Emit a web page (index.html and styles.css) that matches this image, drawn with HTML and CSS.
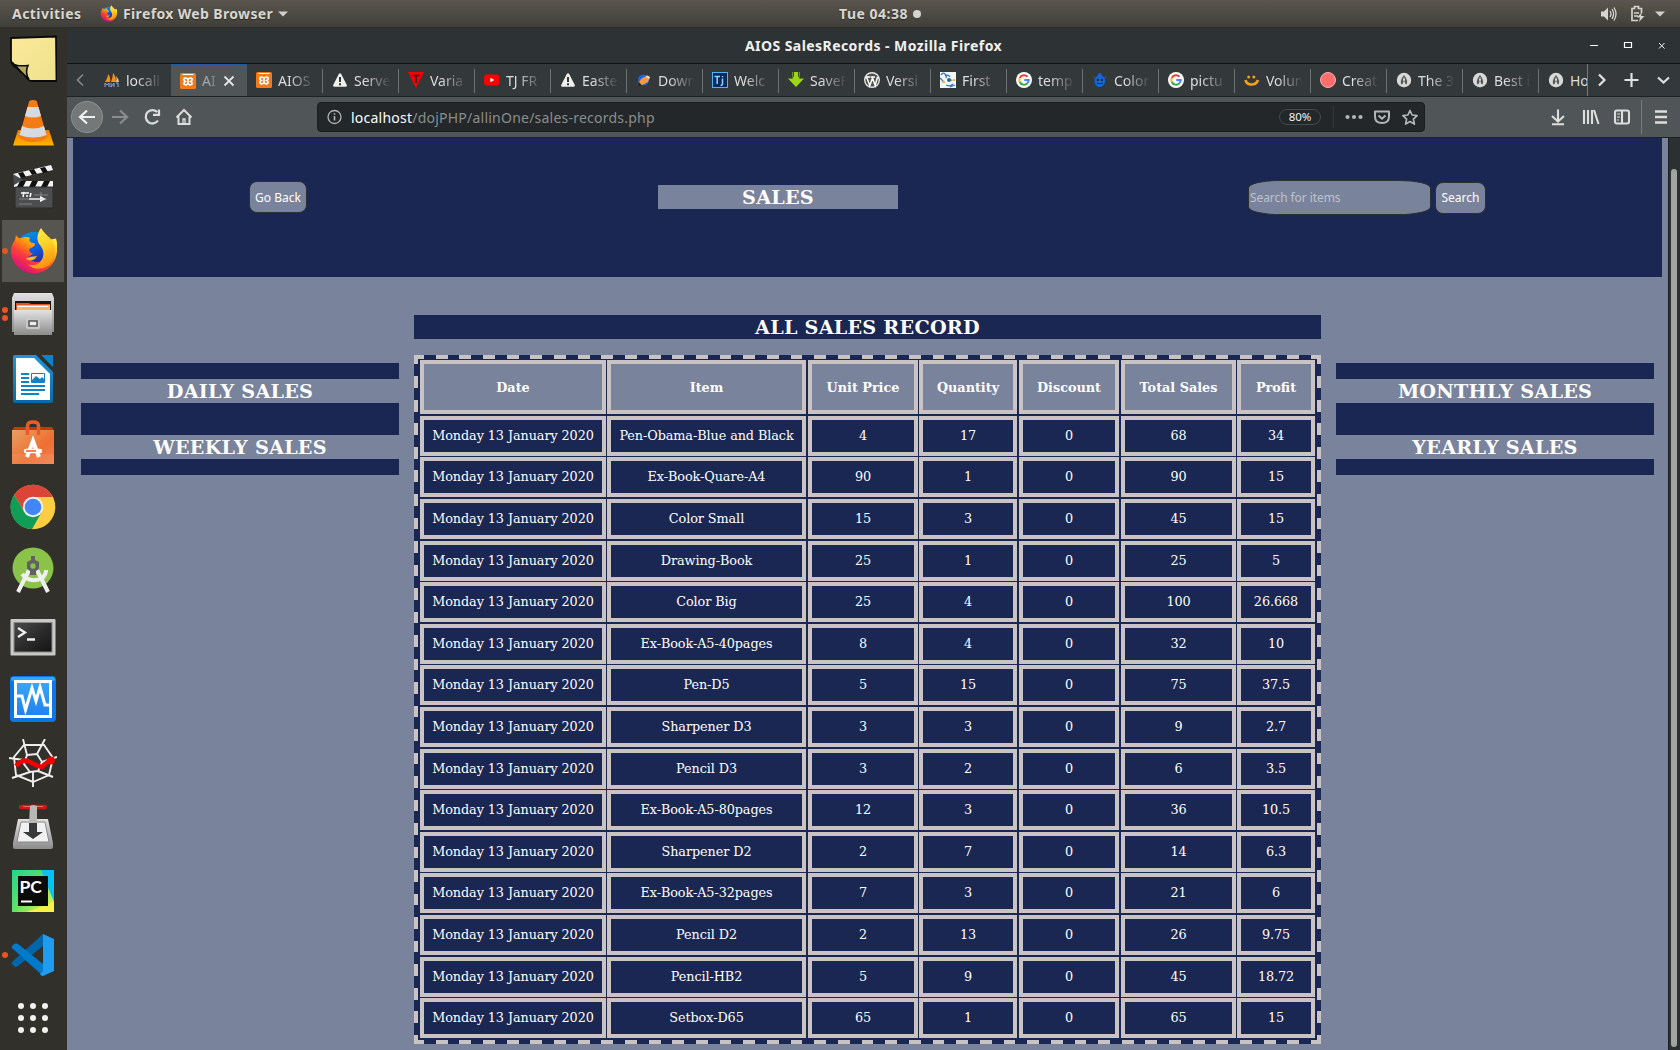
FILE: index.html
```html
<!DOCTYPE html>
<html lang="en">
<head>
<meta charset="utf-8">
<title>AIOS SalesRecords</title>
<link rel="stylesheet" href="styles.css">
</head>
<body>
<svg width="0" height="0" class="defs">
  <defs>
    <linearGradient id="gFox" x1="0.8" y1="0.1" x2="0.2" y2="0.9"><stop offset="0" stop-color="#ffe63a"/><stop offset=".35" stop-color="#ff9a0a"/><stop offset=".65" stop-color="#ff3b3b"/><stop offset="1" stop-color="#d4127c"/></linearGradient>
    <linearGradient id="gTail" x1="0" y1="0" x2="0.3" y2="1"><stop offset="0" stop-color="#fff44f"/><stop offset=".5" stop-color="#ffd52a"/><stop offset="1" stop-color="#ff980e"/></linearGradient>
    <linearGradient id="gBlue" x1="0" y1="0" x2="0.4" y2="1"><stop offset="0" stop-color="#00a0e8"/><stop offset=".55" stop-color="#0a5fe0"/><stop offset="1" stop-color="#3a1c8a"/></linearGradient>
    <linearGradient id="gNote" x1="0" y1="0" x2="1" y2="1"><stop offset="0" stop-color="#fbe99b"/><stop offset="1" stop-color="#eee28c"/></linearGradient>
    <linearGradient id="gSteel" x1="0" y1="0" x2="0" y2="1"><stop offset="0" stop-color="#e2e2e2"/><stop offset="1" stop-color="#8c8c8c"/></linearGradient>
    <linearGradient id="gCone" x1="0" y1="0" x2="0" y2="1"><stop offset="0" stop-color="#f57a00"/><stop offset="1" stop-color="#ffb400"/></linearGradient>
    <linearGradient id="gBag" x1="0" y1="0" x2="1" y2="1"><stop offset="0" stop-color="#e8a063"/><stop offset=".6" stop-color="#ee6f33"/><stop offset="1" stop-color="#f0824e"/></linearGradient>
    <linearGradient id="gDoc" x1="0" y1="0" x2="0" y2="1"><stop offset="0" stop-color="#1e96dc"/><stop offset="1" stop-color="#066aa8"/></linearGradient>
    <linearGradient id="gTerm" x1="0" y1="0" x2="1" y2="1"><stop offset="0" stop-color="#4a4a4a"/><stop offset=".5" stop-color="#2c2c2c"/><stop offset="1" stop-color="#141414"/></linearGradient>
    <linearGradient id="gMon" x1="0" y1="0" x2="0" y2="1"><stop offset="0" stop-color="#38a8f8"/><stop offset="1" stop-color="#2080f0"/></linearGradient>
    <linearGradient id="gPc" x1="0" y1="0" x2="1" y2="1"><stop offset="0" stop-color="#21d789"/><stop offset=".5" stop-color="#5fe06a"/><stop offset="1" stop-color="#fcf84a"/></linearGradient>
    <symbol id="firefox" viewBox="0 0 48 48">
      <circle cx="25" cy="24" r="19" fill="url(#gBlue)"/>
      <path d="M7 8c1 2 2 3 4 3.500c4-2 8-2 10-.5c-1 2-1 3 1 4.500l4 1c0 3-3 4-5 5c-2 2 0 5 3 5c-2 2-4 2-5 4c4 5 12 7 17 1c4-5 3-13 0-18l11-2c1 4 2 7 1 13c-1 12-11 22-24 22C12 46 2 36 2 24C2 18 5 15 6 13Z" fill="url(#gFox)"/>
      <path d="M32 1c-4 6-5 12-1 17c5 6 4 13 0 17c-4 4-9 4-12 2c5 7 18 6 23-2c6-9 4-19-1-24c-3-3-6-5-9-10Z" fill="url(#gTail)"/>
      <path d="M17 32c4-3 7-2 11-3c-2 4-6 6-11 3Z" fill="#ffb52b"/>
    </symbol>
    <symbol id="warn" viewBox="0 0 16 16"><path d="M8 1.200c.5 0 1 .3 1.200.7l5.600 11.200c.4.900-.2 1.700-1.100 1.700H2.300c-.9 0-1.500-.8-1.100-1.700L6.800 1.900c.2-.4.700-.7 1.200-.7Z" fill="#efefec"/><path d="M8 5v5M8 11.300v1.900" stroke="#333739" stroke-width="2"/></symbol>
    <symbol id="xampp" viewBox="0 0 16 16"><rect width="16" height="16" rx="1.500" fill="#f07a1c"/><path d="M2.500 1.500h11" stroke="#fff"/><path d="M8 6.700Q7.300 5 5 5 3.500 5.500 4 7q.3 1 1.200 1.500Q3.600 9.500 4 11q1 1.200 2.500.7Q8 11 8 9.700Q8 11 9.500 11.700 11 12.200 12 11q.4-1.500-1.200-2.500Q11.700 8 12 7q.5-1.500-1-2Q8.700 5 8 6.700Zm0 0v3" fill="none" stroke="#fff" stroke-width="1.700"/></symbol>
    <symbol id="google" viewBox="0 0 16 16"><circle cx="8" cy="8" r="8" fill="#fff"/><g fill="none" stroke-width="2"><path d="M11.500 4.800A4.700 4.700 0 0 0 3.800 6" stroke="#ea4335"/><path d="M3.800 6a4.700 4.700 0 0 0 0 4" stroke="#fbbc05"/><path d="M3.800 10a4.700 4.700 0 0 0 7.300 1.600" stroke="#34a853"/><path d="M11.100 11.600A4.700 4.700 0 0 0 12.700 8H8.300" stroke="#4285f4"/></g></symbol>
    <symbol id="drop" viewBox="0 0 16 16"><circle cx="8" cy="8.500" r="7" fill="#777"/><circle cx="8" cy="8" r="7.200" fill="#d8d8d6"/><path d="M8 3C5 7 4 9.500 5.500 12.500l1.300-.7L8 8l1.200 3.800 1.300.7C12 9.500 11 7 8 3Z" fill="#5a5a5a"/><path d="M8 5 7 8.500h2Z" fill="#fff"/></symbol>
  </defs>
</svg>

<header class="topbar">
  <span class="activities">Activities</span>
  <svg class="tb-fox" width="17" height="17"><use href="#firefox"/></svg>
  <span class="app-name">Firefox Web Browser</span>
  <svg class="caret" width="10" height="6" viewBox="0 0 10 6"><path d="M0 .5h10L5 5.500Z" fill="#d0cfcc"/></svg>
  <span class="clock">Tue 04:38 <i></i></span>
  <svg class="vol" width="17" height="16" viewBox="0 0 17 16"><path d="M1 5.500h3l4-4v13l-4-4H1Z" fill="#d6d4d0"/><path d="M10 5q2 3 0 6M12 3.200q3.200 4.800 0 9.600M14 1.500q4 6.500 0 13" fill="none" stroke="#d6d4d0" stroke-width="1.300"/></svg>
  <svg class="batt" width="15" height="17" viewBox="0 0 15 17"><path d="M8 15.500H2V3.500h2.500v-2h4v2h3V8M4 8h5M4 11h4" fill="none" stroke="#d6d4d0" stroke-width="1.700"/><path d="m12 7-5 5.500h3L9 17l5.500-6H11Z" fill="#d6d4d0"/></svg>
  <svg class="caret2" width="10" height="6" viewBox="0 0 10 6"><path d="M0 .5h10L5 5.500Z" fill="#d0cfcc"/></svg>
</header>

<div class="desktop">
  <nav class="dock">
    <div class="app"><svg viewBox="0 0 48 48"><path d="M2 3 47 1.500 47.500 46H22Q18 45 16 40L4 30Q2 28 2 26Z" fill="url(#gNote)" stroke="#0b0b0b" stroke-width="1.800"/><path d="M3 27c2 4 7 4 16 3.500c-2 4-2 10 1 14Q12 37 3 27Z" fill="#b5a75e" stroke="#0b0b0b" stroke-width="1.600"/></svg></div>
    <div class="app"><svg viewBox="0 0 48 48"><path d="M9 31h31l5 15.500H4Z" fill="url(#gCone)"/><path d="M20 3q0-2 4-2t4 2l10 35q-4 5-14 5T10 38Z" fill="#f57c14"/><path d="m18.500 8h11l2.500 9q-8 3-16 0ZM13 27q11 5 22 0l2.500 9q-13 5-27 0Z" fill="#d6dbe2"/></svg></div>
    <div class="app"><svg viewBox="0 0 48 48"><path d="m4 11 38-9 2 5-38 9Z" fill="#f4f4f4"/><path d="m9 10 5-1 3 5-5 1ZM20 7l5-1 3 5-5 1ZM31 5l5-1 3 5-5 1Z" fill="#111"/><path d="M5 18h39v6H5Z" fill="#f4f4f4"/><path d="m11 18h6l-3 6H8ZM23 18h6l-3 6h-6ZM35 18h6l-3 6h-6Z" fill="#111"/><path d="M6 24h38v21H6Z" fill="#4b4d4e" stroke="#2a2a2a"/><path d="m4 11 10 6-9 5Z" fill="#4a4d50"/><path d="M12 30h8M15 29l-1 5M18 32v2M22 30l-1 4" stroke="#fff" stroke-width="1.500"/><path d="M20 36h14" stroke="#fff" stroke-width="1.500"/><path d="m31 33 6 3-6 3Z" fill="#fff"/><path d="M25 32h14M10 36h28M10 41h13M32 29v5" stroke="#aaa" stroke-width=".6"/></svg></div>
    <div class="app active"><b></b><svg viewBox="0 0 48 48"><use href="#firefox"/></svg></div>
    <div class="app"><b class="two"></b><svg viewBox="0 0 48 48"><path d="m5 2h38l2 5v34H3V7Z" fill="url(#gSteel)"/><path d="M6 10h36v15H6Z" fill="#161616"/><path d="M7 12h13l2 1h19v10H7Z" fill="#e2531e"/><path d="M8 14h33v8H8Z" fill="#f4b56c"/><path d="M8 15.500h31" stroke="#fff"/><path d="M5 19h38v25H5Z" fill="url(#gSteel)"/><rect x="17" y="27" width="14" height="11" rx="2" fill="#c9c9c9"/><rect x="20" y="30" width="8" height="5" fill="#eee" stroke="#555" stroke-width="1.500"/></svg></div>
    <div class="app"><svg viewBox="0 0 48 48"><path d="M6 0h21l17 17v29q0 2-2 2H6q-2 0-2-2V2q0-2 2-2Z" fill="url(#gDoc)"/><path d="M7 3h18l16 16v26H7Z" fill="#fff"/><path d="M32 0h12v12Z" fill="#0e83cd"/><path d="M12 19h8M12 23h8M12 27h8M12 31h24M12 35h24M12 39h18" stroke="#1082c5" stroke-width="2"/><path d="M22.500 18.500h13v9h-13Z" fill="#fff" stroke="#1082c5"/><path d="m23 27v-2l4-4 4 3 2-2 3 3v2Z" fill="#1082c5"/></svg></div>
    <div class="app"><svg viewBox="0 0 48 48"><path d="M5 8h38l2 4H3Z" fill="#b83e0a"/><path d="M3 11h42v34H3Z" fill="url(#gBag)"/><path d="M3 35h42v10H3Z" fill="#fff" opacity=".08"/><path d="M18.500 16V7q0-4 5.500-4t5.500 4v9" fill="none" stroke="#ed5b24" stroke-width="3.500"/><path d="m18 38 6-16 6 16" fill="none" stroke="#fff" stroke-width="4"/><path d="M17 32h14" stroke="#fff" stroke-width="4.500" stroke-linecap="round"/><path d="M17 32h10" stroke="#ed5b24" stroke-width="1.500"/></svg></div>
    <div class="app"><svg viewBox="0 0 48 48"><circle cx="24" cy="24" r="22.300" fill="#ffcd40"/><path d="M24 14H43.900A22.300 22.300 0 0 0 5.300 11.800L15.300 29Z" fill="#db4437"/><path d="M5.300 11.800A22.300 22.300 0 0 0 23 46.300L32.700 29 24 34 15.300 29Z" fill="#0f9d58"/><circle cx="24" cy="24" r="10.200" fill="#f1f1f1"/><circle cx="24" cy="24" r="8.300" fill="#4285f4"/></svg></div>
    <div class="app"><svg viewBox="0 0 48 48"><circle cx="24" cy="21" r="20.500" fill="#8bc34a"/><path d="M9 45 22 19M39 45 26 19" stroke="#efefef" stroke-width="4"/><path d="M13 27q8 10 20 4q4-3 4-8" fill="none" stroke="#efefef" stroke-width="4"/><path d="M22 9h4v4l4 2v7l-3 2v4h-6v-4l-3-2v-7l4-2Z" fill="#616161"/><circle cx="24" cy="19" r="2.700" fill="#8bc34a"/></svg></div>
    <div class="app"><svg viewBox="0 0 48 48"><rect x="1.500" y="8" width="45" height="36.500" rx="1" fill="#c9c9c9"/><rect x="4.500" y="11" width="39" height="30.500" fill="#888"/><rect x="5.500" y="12" width="37" height="28.500" fill="url(#gTerm)"/><path d="m9 17 7 4.500-7 4.500M18 28.500h8" fill="none" stroke="#eee" stroke-width="2.300"/></svg></div>
    <div class="app"><svg viewBox="0 0 48 48"><rect x="1" y="1" width="46" height="46" rx="4" fill="#0b76e6"/><rect x="2" y="2" width="44" height="4" rx="2" fill="#2fa8f8"/><rect x="6.500" y="6.500" width="35" height="35" fill="url(#gMon)" stroke="#fff" stroke-width="3"/><path d="M8 21h5l3.500 14L23 13l4 13 4-14 5 18h6" fill="none" stroke="#fff" stroke-width="3"/></svg></div>
    <div class="app"><svg viewBox="0 0 48 48"><g fill="none" stroke="#eee" stroke-width="1.900"><path d="M15 6 35 6 44 19 40 36 24 43 7 36 5 18Z"/><path d="M18 16 28 15 33 23 29 32 21 33 15 25Z"/><path d="M14 0 18 16M36 0 28 15M0 19 15 21M48 18 33 23M3 39 21 33M44 38 29 32M24 48V33"/></g><path d="M7 27q7-8 14-4t12 5l9-8" fill="none" stroke="#f10000" stroke-width="4.500"/><circle cx="42" cy="21.500" r="4" fill="#f10000"/></svg></div>
    <div class="app"><svg viewBox="0 0 48 48"><path d="M9 16h30l5 24v4q0 2-2 2H6q-2 0-2-2v-4Z" fill="url(#gSteel)"/><path d="M12 19h24l4 20H8Z" fill="#f1f1f1" stroke="#888"/><path d="M12 4h24" stroke="#d2151a" stroke-width="4.500" stroke-linecap="round"/><path d="M14 3.500h20" stroke="#f26a6a"/><path d="M21 3q3-2 7 0v17h-8Z" fill="#b8b8b4"/><path d="M20 20h8v9h6l-10 7-10-7h6Z" fill="#37393a"/></svg></div>
    <div class="app"><svg viewBox="0 0 48 48"><path d="M3 3h42v42H3Z" fill="url(#gPc)"/><path d="m32 3h13v32Z" fill="#07c3f2"/><path d="M18 45 45 35v10Z" fill="#f6f24a"/><rect x="9" y="9" width="30" height="30" fill="#0a0a0a"/><path d="M12 34.500h11" stroke="#fff" stroke-width="2"/><text x="10.500" y="26" class="pc">PC</text></svg></div>
    <div class="app"><b></b><svg viewBox="0 0 48 48"><path d="M34 3v12L9 35q-2 2-4 0l-2-2q-1-1 0-2Z" fill="#0065a9"/><path d="M34 45V33L9 13q-2-1-4 0l-2 2q-1 1 0 2Z" fill="#007acc"/><path d="m34 3 11 5v32l-11 5q-2 0-3-2l3-3Z" fill="#1f9cf0"/></svg></div>
    <div class="app"><svg viewBox="0 0 48 48" fill="#f2f1f0"><circle cx="12" cy="11" r="3"/><circle cx="24" cy="11" r="3"/><circle cx="36" cy="11" r="3"/><circle cx="12" cy="23" r="3"/><circle cx="24" cy="23" r="3"/><circle cx="36" cy="23" r="3"/><circle cx="12" cy="35" r="3"/><circle cx="24" cy="35" r="3"/><circle cx="36" cy="35" r="3"/></svg></div>
  </nav>

  <section class="window">
    <div class="titlebar">
      <span class="title">AIOS SalesRecords - Mozilla Firefox</span>
      <svg class="wm" width="76" height="12" viewBox="0 0 76 12" fill="none" stroke="#fff"><path d="M0 5.500h8"/><path d="M34.500 2.500h7v5h-7Z" stroke-width="1.200"/><path d="m69 3 5.500 5.500M74.500 3 69 8.500"/></svg>
    </div>
    <div class="tabstrip">
      <svg class="scroll-l" width="28" height="32" viewBox="0 0 28 32"><path d="m16 10.500-5.500 5.500 5.500 5.500" fill="none" stroke="#85898a" stroke-width="1.700"/></svg>
      <div class="tabs">
        <div class="tab first"><svg viewBox="0 0 16 16"><path d="M1 10q3-5 3-8q3 3 2 8ZM7 10q2-5 2-9q3 3 3 9Z" fill="#f29111"/><path d="M12 10q1-3 0-6q3 3 3 6Z" fill="#f8c070"/><path d="M1 15V11l2 2 2-2v4M7 11v4l3-4v4M12 11h2v4" stroke="#9ba0dc" fill="none"/></svg><span>locall</span></div>
        <div class="tab current"><svg><use href="#xampp"/></svg><span class="short">AI</span><svg class="close" viewBox="0 0 12 12"><path d="m1.500 1.500 9 9m0-9-9 9" stroke="#e4e5e4" stroke-width="1.800"/></svg></div>
        <div class="tab"><svg><use href="#xampp"/></svg><span>AIOS</span></div>
        <div class="tab"><svg><use href="#warn"/></svg><span>Serve</span></div>
        <div class="tab"><svg viewBox="0 0 16 16"><path d="M0 0h16L8 16Z" fill="#f90000"/><path d="M4.500 3.500h7M8 3.500V11" stroke="#222" stroke-width="1.600"/></svg><span>Varia</span></div>
        <div class="tab"><svg viewBox="0 0 16 16"><rect y="2.500" width="15.500" height="11" rx="3" fill="#f00"/><path d="m6.300 5.800 4 2.200-4 2.200Z" fill="#fff"/></svg><span>TJ FR</span></div>
        <div class="tab"><svg><use href="#warn"/></svg><span>Easte</span></div>
        <div class="tab"><svg viewBox="0 0 16 16"><circle cx="7.500" cy="8" r="5.500" fill="#1a66e0"/><path d="M1 13.500 5 7l6-3.500 3 1.500-2 5-6 3Z" fill="#f59a3e"/><path d="m11 3.500 3 1.500-1 2-3-2Z" fill="#f7d9c0"/><path d="m1 14 2-4 3 3.500Z" fill="#222"/></svg><span>Down</span></div>
        <div class="tab"><svg viewBox="0 0 16 16"><rect x=".5" y=".5" width="15" height="15" fill="#072a5c" stroke="#4db5f5"/><path d="M2.500 4.500H8M5.200 4.500V12M10.500 6.500v5q0 2-2 2M10.500 4v1.200" fill="none" stroke="#8ed1ff" stroke-width="1.500"/></svg><span>Welc</span></div>
        <div class="tab"><svg viewBox="0 0 16 16"><path d="M4.500 0h7v6.500H16L8 15 0 6.500h4.500Z" fill="#9bd916"/><path d="M5.500 0v5M10.500 0v5M2 6h3M11 6h3" stroke="#38570f"/></svg><span>SaveF</span></div>
        <div class="tab"><svg viewBox="0 0 16 16"><circle cx="8" cy="8" r="7.300" fill="#505050" stroke="#e6e6e4" stroke-width="1.400"/><path d="m2.500 5 3.300 8.500L8.500 6l2.700 7.500L13.500 5M2 5h4.500M7 5h4" fill="none" stroke="#fff" stroke-width="1.500"/></svg><span>Versi</span></div>
        <div class="tab"><svg viewBox="0 0 16 16"><rect width="16" height="16" fill="#f4f7fa"/><path d="M1 3q2-3 4-1t1 4M5 4q3-2 5 1M10 15l5-2M6 13q4 2 7-1M0 6l3 3" fill="none" stroke="#3e78c0" stroke-width="1.300"/><path d="M2 10h3M8 9q3-2 4 0M13 8h2" stroke="#cba23d" fill="none" stroke-width="1.500"/><circle cx="9" cy="8" r="2" fill="#2b6a88"/></svg><span>First</span></div>
        <div class="tab"><svg><use href="#google"/></svg><span>temp</span></div>
        <div class="tab"><svg viewBox="0 0 16 16"><path d="M4.500 5Q7 3.500 7 1.500h1.500Q8.500 3.500 11 5q2 2 1.500 5-1 4.500-4.800 4.500T3 10Q2.500 7 4.500 5ZM1.500 4.500l2 2.500M14 4.500 12 7" fill="#1467e0" stroke="#1467e0"/><circle cx="5.800" cy="8" r="1.200" fill="#222b35"/><circle cx="9.800" cy="8" r="1.200" fill="#222b35"/><path d="M5 11.500h6" stroke="#222b35" fill="none"/></svg><span>Color</span></div>
        <div class="tab"><svg><use href="#google"/></svg><span>pictu</span></div>
        <div class="tab"><svg viewBox="0 0 16 16"><path d="M1.500 8q1 4.500 6 4.500T14 8" fill="none" stroke="#f5a214" stroke-width="2.600"/><circle cx="4.700" cy="5" r="1.500" fill="#f5a214"/><circle cx="9.800" cy="5" r="1.500" fill="#f5a214"/></svg><span>Volun</span></div>
        <div class="tab"><svg viewBox="0 0 16 16"><circle cx="8" cy="8" r="7.500" fill="#ff6d6d" stroke="#efb4b0"/></svg><span>Creat</span></div>
        <div class="tab"><svg><use href="#drop"/></svg><span>The 3</span></div>
        <div class="tab"><svg><use href="#drop"/></svg><span>Best i</span></div>
        <div class="tab last"><svg><use href="#drop"/></svg><span>Ho</span></div>
      </div>
      <svg class="strip-end" width="91" height="32" viewBox="0 0 91 32" fill="none" stroke="#e0e0de" stroke-width="2.200"><path d="m11 10.500 5.500 5.500-5.500 5.500"/><path d="M43.500 9v14M36.500 16h14"/><path d="m70 13.500 5.500 5 5.500-5"/></svg>
    </div>
    <div class="toolbar">
      <svg width="130" height="39" viewBox="0 0 130 39" fill="none" stroke="#dcdddc" stroke-width="2.200"><circle cx="20" cy="20" r="15.700" fill="#747878" stroke="#8a8e8e" stroke-width="1"/><path d="M28 20H13.500m6.500-6.500L13 20l7 6.500" stroke="#f1f1f0"/><path d="M45 20h14.500M53 13.500 60 20l-7 6.500" stroke="#898d8d"/><path d="M91 23.500a6.700 6.700 0 1 1-.8-8.500M92 12.500v5.300h-6"/><path d="M109.500 20.500l7.500-7.500 7.500 7.500M111.500 19.500v7.500h11v-7.500" stroke-width="2"/><path d="M116 27v-5h2v5" stroke-width="1.300"/></svg>
      <div class="urlbar">
        <svg width="16" height="16" viewBox="0 0 16 16" fill="none" stroke="#b3b5b6"><circle cx="7.500" cy="8" r="6.500" stroke-width="1.300"/><path d="M7.500 7v4.500M7.500 4.200v1.600" stroke-width="1.600"/></svg>
        <span class="url"><em>localhost</em>/dojPHP/allinOne/sales-records.php</span>
        <span class="zoom">80%</span>
        <svg class="actions" width="91" height="30" viewBox="0 0 91 30" fill="none" stroke="#b3b5b6" stroke-width="2"><path d="M.5 4v22" stroke="#33383b" stroke-width="1"/><g fill="#b3b5b6" stroke="none"><circle cx="14.500" cy="15" r="2.100"/><circle cx="21" cy="15" r="2.100"/><circle cx="27.500" cy="15" r="2.100"/></g><path d="M42 9.500h14v5q0 6.500-7 6.500t-7-6.500Z" stroke-linejoin="round"/><path d="m45.500 13.500 3.500 3.200 3.500-3.200"/><path d="m77 8.500 2.100 4.500 5 .6-3.700 3.500 1 5L77 19.600l-4.400 2.500 1-5-3.700-3.500 5-.6Z" stroke-width="1.700" stroke-linejoin="round"/></svg>
      </div>
      <svg class="tools" width="128" height="39" viewBox="0 0 128 39" fill="none" stroke="#dcdddc" stroke-width="2.100"><path d="M18 12.500V24m-6-5 6 5.500 6-5.500M12 27.300h12"/><path d="M44 13v14M48 13v14M52 13v14M54 13l4.500 14"/><rect x="75" y="13.500" width="14" height="13" rx="2"/><path d="M82 14v12"/><path d="M77 17h3M77 20h3M77 23h2" stroke-width="1.100"/><path d="M101.500 3v34" stroke="#767b7c" stroke-width="1"/><path d="M115 14.500h12M115 20h12M115 25.500h12" stroke-width="2.300"/></svg>
    </div>
    <div class="viewport">
      <main class="page">
        <div class="hero">
          <button class="btn back">Go Back</button>
          <h2 class="sales">SALES</h2>
          <form class="search"><input type="text" placeholder="Search for items"><button type="button" class="btn go">Search</button></form>
        </div>
        <div class="columns">
          <aside class="side"><h2>DAILY SALES</h2><h2>WEEKLY SALES</h2></aside>
          <section class="main">
            <h2>ALL SALES RECORD</h2>
            <div class="records" id="records"></div>
          </section>
          <aside class="side"><h2>MONTHLY SALES</h2><h2>YEARLY SALES</h2></aside>
        </div>
      </main>
      <div class="scrollbar"><div class="thumb"></div></div>
    </div>
  </section>
</div>
<script src="script.js"></script>
</body>
</html>
```
FILE: styles.css
```css
* { box-sizing: border-box; }
body { margin: 0; width: 1680px; height: 1050px; overflow: hidden; background: #30302b; font-family: "Noto Sans", "Open Sans", sans-serif; }
.defs { position: absolute; }
h2 { margin: 0; }

.topbar { height: 27px; display: flex; align-items: center; background: linear-gradient(#5a564e, #403f3a); color: #d8d6d0; font-size: 14px; font-weight: 700; line-height: 27px; text-shadow: 0 1px 1px #2a2925; white-space: nowrap; }
.activities { width: 89px; padding-left: 12px; letter-spacing: .45px; }
.tb-fox { margin-left: 11px; }
.app-name { margin-left: 6px; width: 150px; letter-spacing: .36px; }
.caret { margin-left: 5px; }
.clock { display: flex; align-items: center; margin-left: 551px; width: 90px; letter-spacing: .5px; }
.clock i { width: 8px; height: 8px; border-radius: 50%; background: #d6d4d0; margin-left: 5px; }
.vol { margin-left: auto; }
.batt { margin-left: 13px; }
.caret2 { margin: 0 15px 0 10px; }

.desktop { display: flex; height: 1023px; }
.dock { width: 67px; flex: none; background: #31302b; }
.app { position: relative; height: 64px; display: flex; align-items: center; justify-content: center; padding-right: 1px; }
.app svg { width: 48px; height: 48px; }
.app.active { background: linear-gradient(#565550, #565550) 2px 1px / 62px 62px no-repeat; }
.app b { position: absolute; left: 2px; top: 29px; width: 6px; height: 6px; border-radius: 50%; background: #e95420; }
.app b.two { top: 24px; box-shadow: 0 8px #e95420; }
.pc { font: 700 17.500px "Lato", sans-serif; fill: #fff; }

.window { flex: 1; min-width: 0; display: flex; flex-direction: column; border-top: 1px solid #2c2d2a; }
.titlebar { height: 36px; display: flex; align-items: center; background: #2d3234; border-bottom: 1px solid #101415; color: #f0f1ef; }
.title { flex: 1; padding-left: 90px; text-align: center; font-size: 14px; letter-spacing: .44px; font-weight: 700; }
.wm { margin-right: 14px; }
.tabstrip { height: 33px; display: flex; background: #33383a; border-bottom: 1px solid #1d2123; }
.tabs { display: flex; width: 1493px; overflow: hidden; border-right: 1px solid #74797a; }
.tab { flex: none; width: 76px; height: 32px; display: flex; align-items: center; padding-left: 9px; color: #dcdddc; font-size: 14px; background: linear-gradient(#6d7273, #6d7273) right 5px / 1px 24px no-repeat; }
.tab.first, .tab.last { background: none; }
.tab svg { width: 16px; height: 16px; flex: none; }
.tab span { margin-left: 6px; width: 43px; white-space: nowrap; -webkit-mask-image: linear-gradient(90deg, #000 25%, transparent 86%); mask-image: linear-gradient(90deg, #000 25%, transparent 86%); }
.tab.last span { width: 20px; mask-image: none; -webkit-mask-image: none; }
.tab.current { background: #505557; border-top: 2px solid #215d9c; padding-bottom: 2px; height: 33px; }
.tab.current .short { width: 18px; opacity: .6; -webkit-mask-image: linear-gradient(90deg, #000 40%, transparent); mask-image: linear-gradient(90deg, #000 40%, transparent); }
.tab .close { width: 12px; height: 12px; margin-left: 3px; }
.toolbar { height: 41px; display: flex; align-items: center; background: #505557; border-bottom: 1px solid #1d2123; }
.toolbar > svg { flex: none; margin-top: -2px; }
.urlbar { margin-left: 120px; width: 1108px; height: 30px; display: flex; align-items: center; padding-left: 9px; background: #232729; border: 1px solid #1b1e20; border-radius: 4px; }
.url { margin-left: 8px; font-size: 14px; letter-spacing: .23px; color: #8a8d8e; }
.url em { font-style: normal; color: #fff; }
.zoom { margin-left: auto; width: 42px; height: 16px; border: 1px solid #44494b; border-radius: 8px; text-align: center; line-height: 14px; font-size: 11.500px; color: #f0f0f0; }
.actions { margin-left: 12px; }
.toolbar .tools { margin-left: auto; margin-right: 12px; }

.viewport { flex: 1; min-height: 0; display: flex; overflow: hidden; }
.page { width: 1601px; padding: 0 6px; background: #7a839c; font-family: "DejaVu Serif", serif; color: #fff; }
.page h2 { height: 24px; line-height: 24px; padding-top: 1px; font-size: 19.200px; letter-spacing: .23px; font-weight: 700; text-align: center; }
.hero { height: 139px; background: #192752; display: flex; align-items: flex-start; }
.btn { height: 32px; padding: 0; border: 1px solid #2d2f31; border-radius: 8px; background: #7a839c; color: #fff; font: 12px "Noto Sans", sans-serif; }
.back { width: 58px; margin: 43px 0 0 176px; }
.page .sales { width: 240px; margin: 47px 0 0 351px; background: #7a839c; }
.search { display: flex; align-items: center; gap: 4px; margin: 42px 0 0 350px; }
.search input { width: 183px; height: 35px; padding: 0 1px 1px; border: 1px solid #2d2f31; border-radius: 32px / 8px; background: #7a839c; font: 12px "Noto Sans", sans-serif; letter-spacing: -.08px; }
.search input::placeholder { color: #bdc2ce; opacity: 1; }
.go { width: 51px; }
.columns { display: flex; align-items: flex-start; padding: 38px 8px 0; }
.side { width: 318px; margin-top: 48px; padding: 16px 0; background: #192752; display: flex; flex-direction: column; gap: 32px; }
.side h2 { background: #7a839c; }
.main { width: 907px; margin: 0 15px; }
.main h2 { background: #192752; margin-bottom: 16px; }

.records {
  --row-dash: repeating-linear-gradient(90deg, #cac3c3 0 9.900px, #192752 9.900px 21.700px, #cac3c3 21.700px 23.660px);
  --col-dash: repeating-linear-gradient(180deg, #cac3c3 0 9.500px, #192752 9.500px 21.400px, #cac3c3 21.400px 23.520px);
  height: 689px;
  padding: 5px 0 0 6px;
  display: grid;
  grid-template-columns: 187px 201px 111px 100px 102px 116px 78px;
  grid-template-rows: 55.800px repeat(15, 41.600px);
  background: var(--row-dash) 0 0 / 100% 4px no-repeat, var(--row-dash) 0 100% / 100% 4px no-repeat, var(--col-dash) 0 0 / 4px 100% no-repeat, var(--col-dash) 100% 0 / 4px 100% no-repeat, #192752;
}
.cell { height: 40px; margin-right: 1px; border: 4px solid #cac3c3; font-size: 12.800px; letter-spacing: -.08px; line-height: 31px; text-align: center; white-space: nowrap; }
.cell.wide-gap { margin-right: 2px; }
.cell.end { margin-right: 0; }
.cell.head { height: 54px; line-height: 48px; letter-spacing: 0; font-weight: 700; background: #7a839c; }

.scrollbar { width: 12px; background: #2b3032; border-left: 1px solid #1b1f20; padding: 31px 3px 0 2px; }
.thumb { width: 6px; height: 878px; border-radius: 3px; background: #a2a5a2; }
```
FILE: script.js
```js
const columns = ["Date", "Item", "Unit Price", "Quantity", "Discount", "Total Sales", "Profit"];
const day = "Monday 13 January 2020";
const sales = [
  ["Pen-Obama-Blue and Black", 4, 17, 0, 68, 34],
  ["Ex-Book-Quare-A4", 90, 1, 0, 90, 15],
  ["Color Small", 15, 3, 0, 45, 15],
  ["Drawing-Book", 25, 1, 0, 25, 5],
  ["Color Big", 25, 4, 0, 100, 26.668],
  ["Ex-Book-A5-40pages", 8, 4, 0, 32, 10],
  ["Pen-D5", 5, 15, 0, 75, 37.5],
  ["Sharpener D3", 3, 3, 0, 9, 2.7],
  ["Pencil D3", 3, 2, 0, 6, 3.5],
  ["Ex-Book-A5-80pages", 12, 3, 0, 36, 10.5],
  ["Sharpener D2", 2, 7, 0, 14, 6.3],
  ["Ex-Book-A5-32pages", 7, 3, 0, 21, 6],
  ["Pencil D2", 2, 13, 0, 26, 9.75],
  ["Pencil-HB2", 5, 9, 0, 45, 18.72],
  ["Setbox-D65", 65, 1, 0, 65, 15]
];
const wideGap = [1, 3, 4];
const grid = document.getElementById("records");
function addRow(values, head) {
  values.forEach((value, i) => {
    const cell = document.createElement("div");
    cell.className = "cell" + (head ? " head" : "") + (wideGap.includes(i) ? " wide-gap" : "") + (i === 6 ? " end" : "");
    cell.textContent = value;
    grid.appendChild(cell);
  });
}
addRow(columns, true);
sales.forEach(row => addRow([day, ...row], false));
```
